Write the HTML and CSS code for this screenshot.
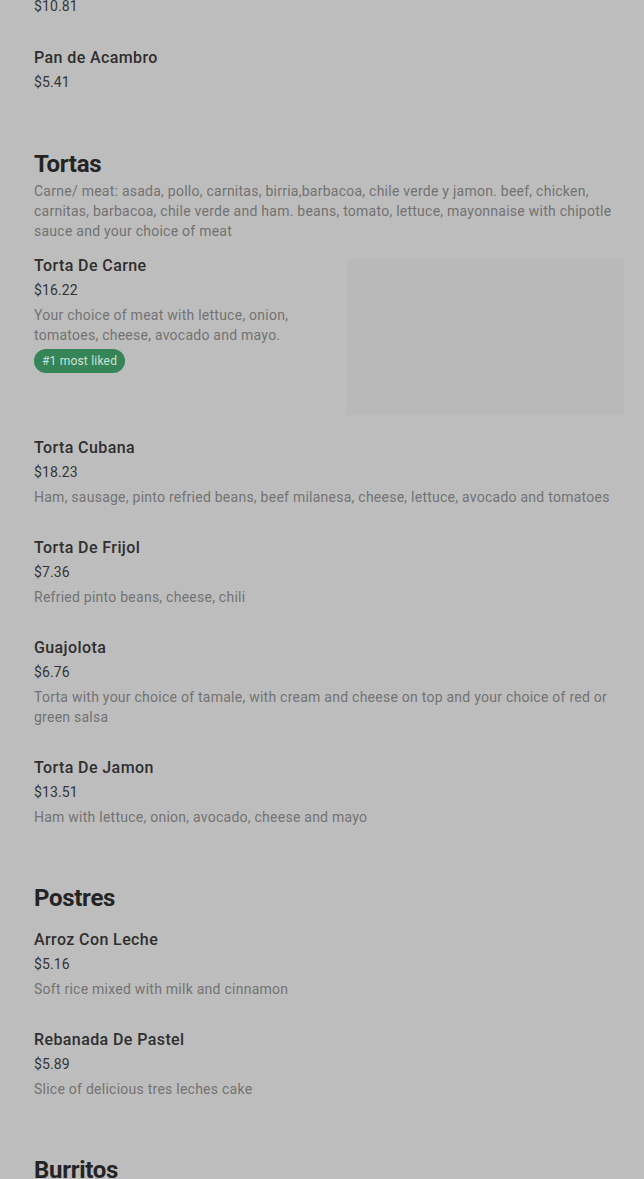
FILE: index.html
```html
<!DOCTYPE html>
<html lang="en">
<head>
<meta charset="utf-8">
<link rel="stylesheet" href="styles.css">
</head>
<body>
<div class="page">
  <section class="section">
    <div class="item">
      <div class="item-text">
        <div class="name">Pan Dulce</div>
        <div class="price">$10.81</div>
      </div>
    </div>
    <div class="item">
      <div class="item-text">
        <div class="name">Pan de Acambro</div>
        <div class="price">$5.41</div>
      </div>
    </div>
  </section>

  <section class="section">
    <h2 class="heading">Tortas</h2>
    <p class="section-desc">Carne/ meat: asada, pollo, carnitas, birria,barbacoa, chile verde y jamon. beef, chicken, carnitas, barbacoa, chile verde and ham. beans, tomato, lettuce, mayonnaise with chipotle sauce and your choice of meat</p>
    <div class="item item-img">
      <div class="item-text narrow">
        <div class="name">Torta De Carne</div>
        <div class="price">$16.22</div>
        <div class="desc">Your choice of meat with lettuce, onion, tomatoes, cheese, avocado and mayo.</div>
        <span class="badge">#1 most liked</span>
      </div>
      <div class="thumb"></div>
    </div>
    <div class="item">
      <div class="item-text">
        <div class="name">Torta Cubana</div>
        <div class="price">$18.23</div>
        <div class="desc">Ham, sausage, pinto refried beans, beef milanesa, cheese, lettuce, avocado and tomatoes</div>
      </div>
    </div>
    <div class="item">
      <div class="item-text">
        <div class="name">Torta De Frijol</div>
        <div class="price">$7.36</div>
        <div class="desc">Refried pinto beans, cheese, chili</div>
      </div>
    </div>
    <div class="item">
      <div class="item-text">
        <div class="name">Guajolota</div>
        <div class="price">$6.76</div>
        <div class="desc">Torta with your choice of tamale, with cream and cheese on top and your choice of red or green salsa</div>
      </div>
    </div>
    <div class="item">
      <div class="item-text">
        <div class="name">Torta De Jamon</div>
        <div class="price">$13.51</div>
        <div class="desc">Ham with lettuce, onion, avocado, cheese and mayo</div>
      </div>
    </div>
  </section>

  <section class="section">
    <h2 class="heading">Postres</h2>
    <div class="item">
      <div class="item-text">
        <div class="name">Arroz Con Leche</div>
        <div class="price">$5.16</div>
        <div class="desc">Soft rice mixed with milk and cinnamon</div>
      </div>
    </div>
    <div class="item">
      <div class="item-text">
        <div class="name">Rebanada De Pastel</div>
        <div class="price">$5.89</div>
        <div class="desc">Slice of delicious tres leches cake</div>
      </div>
    </div>
  </section>

  <section class="section">
    <h2 class="heading">Burritos</h2>
  </section>
</div>
</body>
</html>
```

FILE: styles.css
```css
html, body {
  margin: 0;
  padding: 0;
  background: #bdbdbd;
}
body {
  font-family: Roboto, "Liberation Sans", Arial, sans-serif;
  overflow: hidden;
  height: 1179px;
}
.page {
  padding: 0 20px 0 34px;
  margin-top: -44px;
}
.section {
  margin-bottom: 40px;
}
.heading {
  margin: 0;
  font-size: 24px;
  line-height: 32px;
  font-weight: 700;
  color: #242424;
  letter-spacing: -0.3px;
}
.section-desc {
  margin: 1px 0 -1px;
  font-size: 14px;
  line-height: 20px;
  color: #727272;
  letter-spacing: 0.25px;
}
.item {
  display: flex;
  padding: 14px 0 15px;
}
.item-text {
  display: flex;
  flex-direction: column;
  align-items: flex-start;
  flex: 1;
}
.item-text.narrow {
  flex: 0 0 270px;
}
.name {
  font-size: 16px;
  line-height: 24px;
  font-weight: 500;
  color: #2f2f2f;
  letter-spacing: 0.4px;
}
.price {
  margin-top: 2px;
  margin-bottom: 1px;
  font-size: 14px;
  line-height: 20px;
  color: #353535;
  letter-spacing: 0.1px;
}
.desc {
  margin-top: 4px;
  font-size: 14px;
  line-height: 20px;
  color: #737373;
  letter-spacing: 0.25px;
}
.badge {
  margin-top: 4px;
  height: 24px;
  line-height: 24px;
  padding: 0 8px;
  border-radius: 12px;
  background: #358559;
  color: #cfe2d6;
  font-size: 12px;
  letter-spacing: 0.2px;
}
.item-img {
  padding-bottom: 7px;
}
.thumb {
  margin-left: auto;
  margin-top: 5px;
  width: 277px;
  height: 156px;
  background: #b9b9b9;
}
```
